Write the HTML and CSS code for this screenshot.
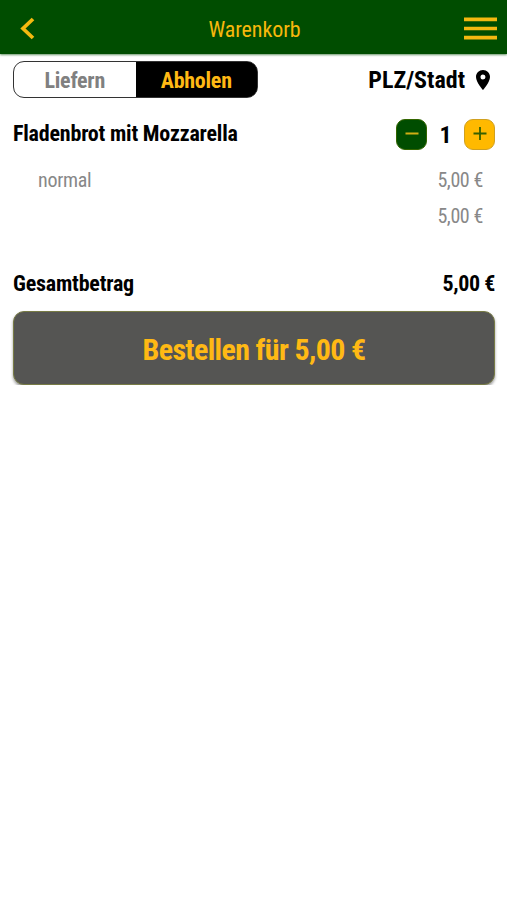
FILE: index.html
```html
<!DOCTYPE html>
<html lang="de">
<head>
<meta charset="utf-8">
<title>Warenkorb</title>
<link rel="stylesheet" href="styles.css">
</head>
<body>
<header class="bar">
  <svg class="back" viewBox="0 0 16 24"><path d="M13 2 3 11.500l10 9.500"/></svg>
  <h1>Warenkorb</h1>
  <svg class="menu" viewBox="0 0 33 24"><path d="M0 2.300h33M0 11.500h33M0 20.700h33"/></svg>
</header>
<main>
  <section class="mode">
    <div class="switch"><span class="off">Liefern</span><span class="on">Abholen</span></div>
    <div class="place"><span>PLZ/Stadt</span>
      <svg class="pin" viewBox="5 2 14 20"><path fill-rule="evenodd" d="M12 2C8.130 2 5 5.130 5 9c0 5.250 7 13 7 13s7-7.750 7-13c0-3.870-3.130-7-7-7zm0 9.500a2.500 2.500 0 1 1 0-5 2.500 2.500 0 0 1 0 5z"/></svg>
    </div>
  </section>
  <section class="item">
    <span class="name">Fladenbrot mit Mozzarella</span>
    <div class="stepper">
      <button class="minus"><svg viewBox="0 0 14 14"><path d="M0.500 7h13"/></svg></button>
      <span class="count">1</span>
      <button class="plus"><svg viewBox="0 0 14 14"><path d="M0.500 7h13M7 0.500v13"/></svg></button>
    </div>
  </section>
  <div class="line"><span>normal</span><span class="price">5,00 €</span></div>
  <div class="line"><span></span><span class="price">5,00 €</span></div>
  <div class="total"><span>Gesamtbetrag</span><span class="price">5,00 €</span></div>
  <button class="order">Bestellen für 5,00 €</button>
</main>
</body>
</html>
```
FILE: styles.css
```css
* { box-sizing: border-box; }
body { margin: 0; background: #fff; color: #000; font-family: "Roboto Condensed", Roboto, sans-serif; font-stretch: 75%; }
button { font: inherit; padding: 0; margin: 0; }
.bar { height: 54px; background: #004d00; box-shadow: 0 1px 2px #004d0099; display: flex; align-items: center; justify-content: space-between; padding: 3px 10px 0 20px; }
.bar h1 { margin: 0; font-size: 22px; font-weight: 400; color: #f6b80c; line-height: 30px; padding: 2px 0 0 9px; letter-spacing: -0.1px; }
.back { width: 16px; height: 24px; }
.menu { width: 33px; height: 24px; }
.bar path { fill: none; stroke: #f4b910; stroke-width: 3.7; }
main { padding: 7px 12px 0 13px; }
.mode { display: flex; justify-content: space-between; height: 37px; }
.switch { display: flex; width: 245px; border: 1px solid #333; border-radius: 11px; overflow: hidden; font-size: 22px; font-weight: 700; line-height: 37px; text-align: center; background: linear-gradient(90deg, #fff 50%, #000 50%); }
.switch span { flex: 1; letter-spacing: -0.25px; }
.off { color: #808080; }
.on { background: #000; color: #ffb914; }
.place { display: flex; align-items: center; gap: 11px; font-size: 24px; font-weight: 700; padding-right: 5px; }
.place span { padding-top: 1px; }
.pin { width: 14px; height: 20px; }
.item { display: flex; justify-content: space-between; align-items: center; margin-top: 20px; height: 32px; font-size: 22px; font-weight: 700; letter-spacing: -0.2px; }
.name { padding-bottom: 2px; }
.stepper { display: flex; align-items: center; }
.stepper button { width: 31px; height: 31px; border: 1px solid #d0a020; border-radius: 9px; display: grid; place-items: center; }
.stepper svg { width: 14px; height: 14px; transform: translateY(-.5px); }
.stepper path { stroke-width: 1.8; }
.stepper .minus { background: #004d00; border-color: #336600; }
.minus path { stroke: #d0ae14; }
.plus { background: #ffb900; }
.plus path { stroke: #356000; }
.count { width: 37px; padding-top: 2px; text-align: center; font-size: 24px; }
.line { display: flex; justify-content: space-between; height: 35px; line-height: 35px; font-size: 20px; color: #888; letter-spacing: -0.3px; padding: 0 12px 0 25px; }
.item + .line { margin-top: 13px; }
.line + .line { line-height: 36px; }
.price { letter-spacing: -0.4px; }
.total { display: flex; justify-content: space-between; font-size: 22px; font-weight: 700; line-height: 30px; margin-top: 36px; letter-spacing: -0.2px; }
.order { display: block; width: 100%; height: 74px; margin-top: 12px; padding-top: 2px; border: 1px solid #777b45; border-radius: 11px; background: #555553; color: #ffb914; font-size: 30px; font-weight: 700; letter-spacing: -0.64px; box-shadow: 0 2px 3px #0006; }
```
